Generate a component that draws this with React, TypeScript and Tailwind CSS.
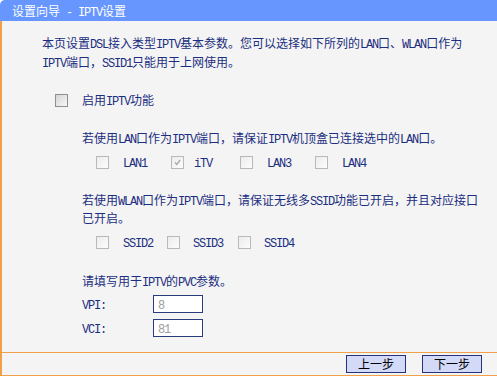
import React from "react";

// 拉丁字符用等宽字体压到半角宽度，中文用 Noto Sans CJK
function T({ s }: { s: string }) {
  return (
    <>
      {s.split(/([\x20-\x7e]+)/).map((p, i) =>
        /^[\x20-\x7e]+$/.test(p) ? (
          <span key={i} className="font-['Liberation_Mono',monospace] tracking-[-1.2px] leading-[12px] whitespace-pre">
            {p}
          </span>
        ) : (
          <React.Fragment key={i}>{p}</React.Fragment>
        )
      )}
    </>
  );
}

function Box({ checked = false, strong = false }: { checked?: boolean; strong?: boolean }) {
  return (
    <div
      className={
        strong
          ? "relative w-[13px] h-[13px] shrink-0 border border-[#8f8f8f] bg-gradient-to-br from-[#d4d4d4] to-[#f8f8f8]"
          : "relative w-[13px] h-[13px] shrink-0 border border-[#b9b9b9] bg-gradient-to-br from-[#ececec] to-[#fcfcfc]"
      }
    >
      {checked && (
        <svg viewBox="0 0 11 11" className="absolute inset-0 w-[11px] h-[11px]">
          <path d="M3 5.5 L4.8 7.5 L8.2 3" stroke="#a8a8a8" strokeWidth="1.3" fill="none" />
        </svg>
      )}
    </div>
  );
}

function Opt({ label, w, gap, checked }: { label: string; w: string; gap: string; checked?: boolean }) {
  return (
    <div className={`flex items-center ${w}`}>
      <Box checked={checked} />
      <span className={gap}>
        <T s={label} />
      </span>
    </div>
  );
}

export default function App() {
  return (
    <div className="w-[497px] h-[377px] overflow-hidden bg-white text-[12px] font-['Noto_Sans_CJK_SC',sans-serif]">
      {/* 标题栏 */}
      <div className="h-[21px] bg-[#6696fe] rounded-tl-[5px] pl-[12px] leading-[21px] text-white">
        <T s="设置向导 - IPTV设置" />
      </div>

      <div className="border-l-2 border-[#f0a048] bg-[#f4f4f4] text-[#1b2e80]">
        <div className="h-[331px] pt-[12px]">
          <div className="ml-[40px] h-[19px] leading-[19px]">
            <T s="本页设置DSL接入类型IPTV基本参数。您可以选择如下所列的LAN口、WLAN口作为" />
          </div>
          <div className="ml-[40px] h-[19px] leading-[19px]">
            <T s="IPTV端口，SSID1只能用于上网使用。" />
          </div>

          <div className="mt-[19px] h-[20px] flex items-center">
            <div className="ml-[53px]">
              <Box strong />
            </div>
            <span className="ml-[14px]">
              <T s="启用IPTV功能" />
            </span>
          </div>

          <div className="mt-[18px] h-[20px] leading-[20px] ml-[80px]">
            <T s="若使用LAN口作为IPTV端口，请保证IPTV机顶盒已连接选中的LAN口。" />
          </div>

          <div className="mt-[4px] h-[20px] flex items-center pl-[94px]">
            <Opt label="LAN1" w="w-[75px]" gap="ml-[14px]" />
            <Opt label="iTV" w="w-[69px]" gap="ml-[10px]" checked />
            <Opt label="LAN3" w="w-[75px]" gap="ml-[14px]" />
            <Opt label="LAN4" w="w-[75px]" gap="ml-[14px]" />
          </div>

          <div className="mt-[19px] ml-[80px] h-[18px] leading-[18px]">
            <T s="若使用WLAN口作为IPTV端口，请保证无线多SSID功能已开启，并且对应接口" />
          </div>
          <div className="ml-[80px] h-[18px] leading-[18px]">已开启。</div>

          <div className="mt-[5px] h-[20px] flex items-center pl-[94px]">
            <Opt label="SSID2" w="w-[71px]" gap="ml-[14px]" />
            <Opt label="SSID3" w="w-[71px]" gap="ml-[13px]" />
            <Opt label="SSID4" w="w-[71px]" gap="ml-[13px]" />
          </div>

          <div className="mt-[19px] h-[20px] leading-[20px] ml-[80px]">
            <T s="请填写用于IPTV的PVC参数。" />
          </div>

          <div className="mt-[4px] h-[18px] flex items-center ml-[80px]">
            <span className="w-[71px]">
              <T s="VPI:" />
            </span>
            <div className="w-[50px] h-[18px] border border-[#2a3c7c] bg-white pl-[4px] leading-[16px] text-[#a0a0a0]">
              <T s="8" />
            </div>
          </div>

          <div className="mt-[6px] h-[18px] flex items-center ml-[80px]">
            <span className="w-[71px]">
              <T s="VCI:" />
            </span>
            <div className="w-[50px] h-[18px] border border-[#2a3c7c] bg-white pl-[4px] leading-[16px] text-[#a0a0a0]">
              <T s="81" />
            </div>
          </div>
        </div>

        {/* 底部按钮 */}
        <div className="h-[24px] border-y border-[#f0a048] flex items-center justify-end gap-[16px] pr-[15px]">
          <button className="w-[60px] h-[18px] border border-[#26337a] bg-[#d3daf8] text-black leading-[16px]">
            上一步
          </button>
          <button className="w-[60px] h-[18px] border border-[#26337a] bg-[#d3daf8] text-black leading-[16px]">
            下一步
          </button>
        </div>
      </div>
    </div>
  );
}
